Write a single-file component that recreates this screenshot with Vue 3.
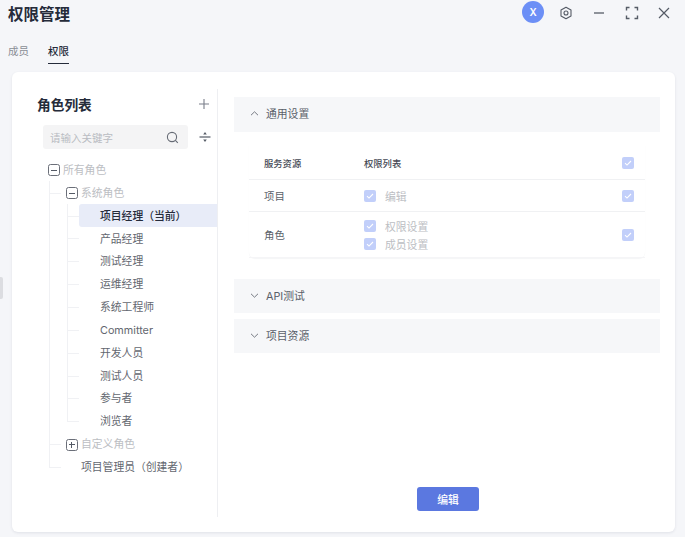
<script setup>
const roles = ['产品经理', '测试经理', '运维经理', '系统工程师', 'Committer', '开发人员', '测试人员', '参与者', '浏览者']
</script>

<template>
  <div class="page">
    <div class="handle"></div>
    <header class="top">
      <h1 class="title">权限管理</h1>
      <div class="actions">
        <span class="avatar">X</span>
        <button class="act">
          <svg width="14" height="14" viewBox="0 0 14 14" fill="none" stroke="#555b66" stroke-width="1.1">
            <path d="M7 1.2l5 2.9v5.8l-5 2.9-5-2.9V4.1z" stroke-linejoin="round" />
            <circle cx="7" cy="7" r="2" />
          </svg>
        </button>
        <button class="act">
          <svg width="14" height="14" viewBox="0 0 14 14" fill="none" stroke="#555b66" stroke-width="1.3">
            <path d="M2 7h10" />
          </svg>
        </button>
        <button class="act">
          <svg width="14" height="14" viewBox="0 0 14 14" fill="none" stroke="#555b66" stroke-width="1.4">
            <path d="M1.5 4.5v-3h3M9.5 1.5h3v3M12.5 9.5v3h-3M4.5 12.5h-3v-3" />
          </svg>
        </button>
        <button class="act">
          <svg width="14" height="14" viewBox="0 0 14 14" fill="none" stroke="#555b66" stroke-width="1.2">
            <path d="M2 2l10 10M12 2L2 12" />
          </svg>
        </button>
      </div>
    </header>

    <nav class="tabs">
      <a class="tab">成员</a>
      <a class="tab on">权限</a>
    </nav>

    <main class="card">
      <aside class="side">
        <div class="side-head">
          <h2>角色列表</h2>
          <svg width="12" height="12" viewBox="0 0 12 12" fill="none" stroke="#7a7f8a" stroke-width="1.1">
            <path d="M6 1v10M1 6h10" />
          </svg>
        </div>
        <div class="search-row">
          <div class="search">
            <span>请输入关键字</span>
            <svg width="13" height="13" viewBox="0 0 13 13" fill="none" stroke="#666b75" stroke-width="1.1">
              <circle cx="6" cy="6" r="4.6" />
              <path d="M9.4 9.4l2.4 2.4" />
            </svg>
          </div>
          <svg class="fold" width="12" height="12" viewBox="0 0 12 12" fill="#555b66">
            <rect x="0.5" y="5.4" width="11" height="1.2" />
            <path d="M6 1l1.8 2.6H4.2zM6 11l1.8-2.6H4.2z" />
          </svg>
        </div>

        <div class="tree">
          <div class="row lv1 muted">
            <i class="box"><b class="minus"></b></i>所有角色
          </div>
          <div class="group g1">
            <div class="row lv2 muted stub">
              <i class="box"><b class="minus"></b></i>系统角色
            </div>
            <div class="group g2">
              <div class="row lv3 active stub">项目经理（当前）</div>
              <div v-for="r in roles" :key="r" class="row lv3 stub">{{ r }}</div>
            </div>
            <div class="row lv2 muted stub">
              <i class="box"><b class="minus"></b><b class="vert"></b></i>自定义角色
            </div>
            <div class="row lv2 plain stub">项目管理员（创建者）</div>
          </div>
        </div>
      </aside>

      <section class="content">
        <div class="panel first">
          <svg width="9" height="9" viewBox="0 0 9 9" fill="none" stroke="#666b75" stroke-width="0.9">
            <path d="M1 6.2l3.5-3.4L8 6.2" />
          </svg>
          <span class="ptext">通用设置</span>
        </div>

        <div class="table">
          <div class="tr head">
            <div class="c1">服务资源</div>
            <div class="c2">权限列表</div>
            <span class="check"><svg width="8" height="8" viewBox="0 0 8 8" fill="none" stroke="#fff" stroke-width="1.1"><path d="M1 4.2l2 1.9L7 2" /></svg></span>
          </div>
          <div class="tr r1">
            <div class="c1">项目</div>
            <div class="c2">
              <label class="opt"><span class="check"><svg width="8" height="8" viewBox="0 0 8 8" fill="none" stroke="#fff" stroke-width="1.1"><path d="M1 4.2l2 1.9L7 2" /></svg></span>编辑</label>
            </div>
            <span class="check"><svg width="8" height="8" viewBox="0 0 8 8" fill="none" stroke="#fff" stroke-width="1.1"><path d="M1 4.2l2 1.9L7 2" /></svg></span>
          </div>
          <div class="tr r2">
            <div class="c1">角色</div>
            <div class="c2">
              <label class="opt"><span class="check"><svg width="8" height="8" viewBox="0 0 8 8" fill="none" stroke="#fff" stroke-width="1.1"><path d="M1 4.2l2 1.9L7 2" /></svg></span>权限设置</label>
              <label class="opt"><span class="check"><svg width="8" height="8" viewBox="0 0 8 8" fill="none" stroke="#fff" stroke-width="1.1"><path d="M1 4.2l2 1.9L7 2" /></svg></span>成员设置</label>
            </div>
            <span class="check"><svg width="8" height="8" viewBox="0 0 8 8" fill="none" stroke="#fff" stroke-width="1.1"><path d="M1 4.2l2 1.9L7 2" /></svg></span>
          </div>
        </div>

        <div class="panel api">
          <svg width="9" height="9" viewBox="0 0 9 9" fill="none" stroke="#666b75" stroke-width="0.9">
            <path d="M1 2.8l3.5 3.4L8 2.8" />
          </svg>
          <span class="ptext">API测试</span>
        </div>
        <div class="panel res">
          <svg width="9" height="9" viewBox="0 0 9 9" fill="none" stroke="#666b75" stroke-width="0.9">
            <path d="M1 2.8l3.5 3.4L8 2.8" />
          </svg>
          <span class="ptext">项目资源</span>
        </div>

        <div class="foot">
          <button class="edit">编辑</button>
        </div>
      </section>
    </main>
  </div>
</template>

<style>
html, body {
  margin: 0;
  background: #f5f6f9;
}
</style>

<style scoped>
.page {
  position: relative;
  width: 685px;
  height: 537px;
  overflow: hidden;
  display: flex;
  flex-direction: column;
  background: #f5f6f9;
  font-family: Inter, "Noto Sans CJK SC", sans-serif;
  font-size: 10.8px;
  color: #5a5f69;
}
.handle {
  position: absolute;
  left: 0;
  top: 277px;
  width: 2.5px;
  height: 22px;
  border-radius: 0 2px 2px 0;
  background: #dcdde1;
}
.top {
  height: 30px;
  flex: none;
  padding: 0 14px 0 8px;
  display: flex;
  align-items: center;
  justify-content: space-between;
}
.title {
  margin: 0;
  font-size: 15.5px;
  font-weight: 700;
  line-height: 30px;
  color: #252b3a;
}
.actions {
  display: flex;
  align-items: center;
  padding-bottom: 4px;
}
.avatar {
  width: 22px;
  height: 22px;
  margin: -2px 15px 0 0;
  border-radius: 50%;
  background: #6c8ff6;
  color: #fff;
  font-size: 10px;
  font-weight: 600;
  display: flex;
  align-items: center;
  justify-content: center;
}
.act {
  width: 14px;
  height: 14px;
  padding: 0;
  margin-left: 19px;
  border: 0;
  background: none;
  display: flex;
}
.act:first-of-type {
  margin-left: 0;
}
.act:last-child {
  margin-left: 18px;
}
.tabs {
  height: 34px;
  flex: none;
  padding: 8px 0 0 8px;
  box-sizing: border-box;
  display: flex;
  gap: 19px;
  font-size: 10.5px;
}
.tab {
  height: 26px;
  box-sizing: border-box;
  padding-top: 6px;
  line-height: 16px;
  color: #8a8e96;
}
.tab.on {
  color: #252b3a;
  font-weight: 500;
  border-bottom: 1.5px solid #252b3a;
}
.card {
  width: 663px;
  height: 460px;
  flex: none;
  margin: 8px 0 0 12px;
  box-sizing: border-box;
  padding: 17px 0 15px;
  display: flex;
  background: #fff;
  border-radius: 6px;
  box-shadow: 0 1px 3px rgba(40, 50, 80, 0.1);
}
.side {
  width: 206px;
  box-sizing: border-box;
  border-right: 1.5px solid #eeeff2;
}
.side-head {
  display: flex;
  align-items: center;
  justify-content: space-between;
  padding: 6px 7px 0 25px;
  height: 24px;
  box-sizing: border-box;
}
.side-head h2 {
  margin: 0;
  font-size: 13.7px;
  font-weight: 700;
  color: #252b3a;
}
.search-row {
  margin-top: 12px;
  padding-left: 31px;
  display: flex;
  align-items: center;
}
.search {
  width: 145px;
  height: 24px;
  box-sizing: border-box;
  padding: 0 9px 0 7px;
  background: #f4f4f5;
  border-radius: 3px;
  display: flex;
  align-items: center;
  justify-content: space-between;
  color: #b9bcc2;
  font-size: 10.5px;
}
.fold {
  margin-left: 11px;
}
.tree {
  margin-top: 9.5px;
}
.row {
  position: relative;
  height: 22.85px;
  line-height: 22.85px;
  padding-top: 3px;
  display: flex;
  align-items: center;
  box-sizing: border-box;
  white-space: nowrap;
  color: #63676f;
}
.lv1 {
  padding-left: 35.5px;
}
.lv2 {
  padding-left: 53.5px;
}
.lv3 {
  margin-left: 67px;
  padding-left: 21px;
}
.muted {
  color: #bcbec3;
}
.plain {
  padding-left: 69px;
}
.active {
  background: #e8ecf8;
  color: #252b3a;
  font-weight: 500;
  border-radius: 3px 0 0 3px;
}
.box {
  position: relative;
  width: 12px;
  height: 12px;
  margin: -2px 3.5px 0 0;
  box-sizing: border-box;
  border: 1px solid #6b6f79;
  border-radius: 2.5px;
  background: #fff;
  flex: none;
}
.minus {
  position: absolute;
  left: 2px;
  top: 4.25px;
  width: 6px;
  height: 1.5px;
  background: #555b66;
}
.vert {
  position: absolute;
  left: 4.25px;
  top: 2px;
  width: 1.5px;
  height: 6px;
  background: #555b66;
}
.group {
  position: relative;
}
.group::before {
  content: "";
  position: absolute;
  top: 0;
  width: 1px;
  background: #f0f1f4;
}
.g1::before {
  left: 37px;
  bottom: 11px;
}
.g2::before {
  left: 55px;
  bottom: 11px;
}
.stub::before {
  content: "";
  position: absolute;
  top: 50%;
  height: 1px;
  background: #f0f1f4;
}
.lv2.stub::before {
  left: 37px;
  width: 12px;
}
.lv3.stub::before {
  left: -12px;
  width: 12px;
}
.content {
  flex: 1;
  min-width: 0;
  padding: 8px 15px 6px 16px;
  display: flex;
  flex-direction: column;
}
.panel {
  height: 35px;
  flex: none;
  box-sizing: border-box;
  padding: 0 0 2px 16px;
  display: flex;
  align-items: center;
  background: #f6f7f9;
  color: #5a5f69;
}
.first {
  padding-bottom: 3px;
}
.ptext {
  margin-left: 7px;
}
.api {
  margin-top: 21px;
  height: 34px;
}
.res {
  margin-top: 6px;
  height: 34px;
}
.table {
  margin: 13px 15px 0;
  border-radius: 0 0 6px 6px;
  box-shadow: 0 1px 1px rgba(40, 50, 80, 0.05);
}
.tr {
  display: flex;
  align-items: center;
  box-sizing: border-box;
  padding: 0 11px 0 15px;
  border-bottom: 1px solid #f0f1f3;
}
.head {
  height: 35px;
  padding-top: 1px;
}
.head .c1,
.head .c2 {
  font-size: 9.3px;
  font-weight: 500;
  color: #454a55;
}
.r1 {
  height: 32px;
}
.r2 {
  height: 46px;
  border-bottom-color: #f5f5f7;
}
.c1 {
  width: 100px;
  font-size: 10.4px;
  color: #5a5f69;
}
.c2 {
  flex: 1;
  display: flex;
  flex-direction: column;
  gap: 6px;
}
.opt {
  display: flex;
  align-items: center;
  height: 12px;
  color: #bcbec3;
}
.check {
  width: 12px;
  height: 12px;
  margin-right: 9px;
  flex: none;
  border-radius: 2px;
  background: #c2cffa;
  display: flex;
  align-items: center;
  justify-content: center;
}
.tr > .check {
  margin-right: 0;
}
.foot {
  margin-top: auto;
  display: flex;
  justify-content: center;
}
.edit {
  width: 62px;
  height: 24px;
  margin-left: 2px;
  padding: 0;
  border: 0;
  border-radius: 3px;
  background: #5b78e0;
  color: #fff;
  font: 500 10.8px Inter, "Noto Sans CJK SC", sans-serif;
}
</style>
